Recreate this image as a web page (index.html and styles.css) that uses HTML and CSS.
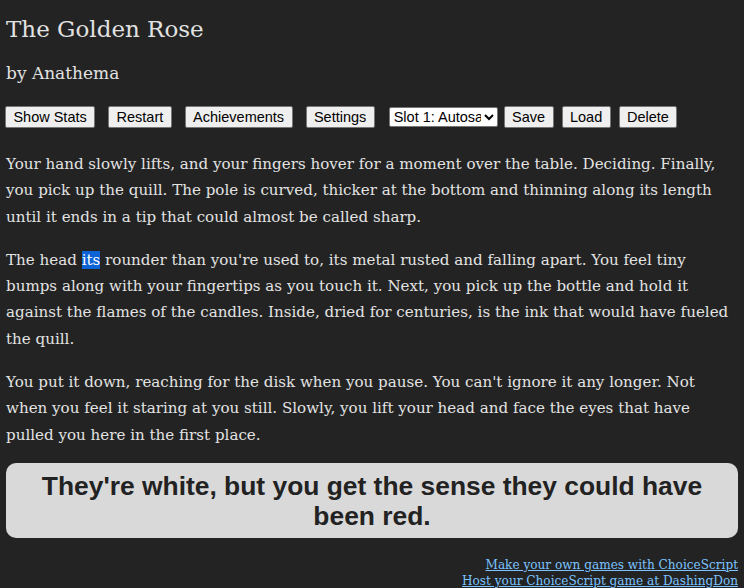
FILE: index.html
```html
<!DOCTYPE html>
<html>
<head>
<meta charset="utf-8">
<link rel="stylesheet" href="styles.css">
</head>
<body>
<div class="page">
  <h1 class="title">The Golden Rose</h1>
  <h2 class="author">by Anathema</h2>
  <div class="toolbar">
    <button class="btn">Show Stats</button>
    <button class="btn">Restart</button>
    <button class="btn">Achievements</button>
    <button class="btn">Settings</button>
    <div class="slots">
      <select class="slot"><option>Slot 1: Autosave</option></select>
      <button class="btn">Save</button>
      <button class="btn">Load</button>
      <button class="btn">Delete</button>
    </div>
  </div>
  <div class="story">
    <p>Your hand slowly lifts, and your fingers hover for a moment over the table. Deciding. Finally, you pick up the quill. The pole is curved, thicker at the bottom and thinning along its length until it ends in a tip that could almost be called sharp.</p>
    <p>The head <span class="sel">its</span> rounder than you're used to, its metal rusted and falling apart. You feel tiny bumps along with your fingertips as you touch it. Next, you pick up the bottle and hold it against the flames of the candles. Inside, dried for centuries, is the ink that would have fueled the quill.</p>
    <p>You put it down, reaching for the disk when you pause. You can't ignore it any longer. Not when you feel it staring at you still. Slowly, you lift your head and face the eyes that have pulled you here in the first place.</p>
  </div>
  <button class="next">They're white, but you get the sense they could have been red.</button>
  <div class="footer">
    <a href="#">Make your own games with ChoiceScript</a><br>
    <a href="#">Host your ChoiceScript game at DashingDon</a>
  </div>
</div>
</body>
</html>
```
FILE: styles.css
```css
html, body {
  margin: 0;
  padding: 0;
  background: #232323;
}
.page {
  padding: 0 6px 0 6px;
  color: #e2e2e2;
  font-family: "DejaVu Serif", Georgia, serif;
}
.title {
  margin: 14px 0 0;
  font-size: 23px;
  font-weight: normal;
  line-height: 30px;
}
.author {
  margin: 17px 0 0;
  font-size: 17px;
  font-weight: normal;
  line-height: 24px;
}
.toolbar {
  display: flex;
  align-items: center;
  gap: 13px;
  margin-top: 21px;
  margin-left: -1px;
}
.slots {
  display: flex;
  align-items: center;
  gap: 8px;
  margin-left: 1px;
}
.btn {
  font-family: "Liberation Sans", Arial, sans-serif;
  font-size: 14.5px;
  height: 22px;
  padding: 0 7.4px;
  background: #efefef;
  color: #000;
  border: 1px solid #767676;
  border-radius: 2px;
  margin: 0;
}
.slot {
  font-family: "Liberation Sans", Arial, sans-serif;
  font-size: 14.5px;
  height: 20px;
  width: 109px;
  background: #fff;
  color: #000;
  border: 1px solid #767676;
  border-radius: 2px;
  margin: 0 -2px 0 0;
}
.story {
  margin-top: 23px;
  font-size: 15.1px;
  line-height: 26.3px;
}
.story p {
  margin: 0 0 17px;
}
.story p:last-child {
  margin-bottom: 0;
}
.sel {
  background: #0b63d6;
  color: #fff;
}
.next {
  display: block;
  width: 100%;
  margin-top: 15px;
  padding: 8px 20px 7px;
  background: #d9d9d9;
  color: #222;
  border: none;
  border-radius: 10px;
  font-family: "Liberation Sans", Arial, sans-serif;
  font-weight: bold;
  font-size: 26.4px;
  line-height: 30px;
}
.footer {
  margin-top: 19px;
  text-align: right;
  font-size: 12.1px;
  line-height: 16px;
}
.footer a {
  color: #7cc3ff;
}
```
